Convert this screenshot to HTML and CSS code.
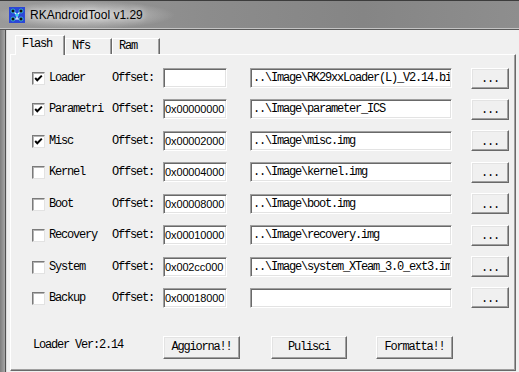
FILE: index.html
```html
<!DOCTYPE html>
<html lang="it">
<head>
    <meta charset="utf-8">
    <title>RKAndroidTool v1.29</title>
    <link rel="stylesheet" href="styles.css">
</head>
<body>
    <div class="window">
        <div class="titlebar">
            <svg class="app-icon" width="16" height="16" viewBox="0 0 16 16">
                <rect x="0" y="0" width="16" height="16" fill="#2b47d6"/>
                <path d="M4 4 L8 8 L12 4 M8 8 L8 12 M4 12 L8 12 L12 12" stroke="#ffffff" stroke-width="1.2" fill="none"/>
                <circle cx="4" cy="4" r="2" fill="#101010" stroke="#38d0f0" stroke-width="0.8"/>
                <circle cx="12" cy="4" r="2" fill="#101010" stroke="#38d0f0" stroke-width="0.8"/>
                <circle cx="8" cy="8" r="1.8" fill="#38d0f0"/>
                <circle cx="4" cy="12" r="2" fill="#101010" stroke="#38d0f0" stroke-width="0.8"/>
                <circle cx="12" cy="12" r="2" fill="#101010" stroke="#38d0f0" stroke-width="0.8"/>
            </svg>
            <span class="title">RKAndroidTool v1.29</span>
        </div>
        <div class="frame">
            <div class="frame-left"></div>
            <div class="client">
                <div class="tabs">
                    <div class="tab active">Flash</div>
                    <div class="tab">Nfs</div>
                    <div class="tab">Ram</div>
                </div>
                <div class="panel">
                    <div class="rows">
                        <span class="check checked"></span>
                        <span class="name">Loader</span>
                        <span class="offset-label">Offset:</span>
                        <input class="offset" type="text" value="">
                        <input class="path" type="text" value="..\Image\RK29xxLoader(L)_V2.14.bin">
                        <button class="browse">...</button>

                        <span class="check checked"></span>
                        <span class="name">Parametri</span>
                        <span class="offset-label">Offset:</span>
                        <input class="offset" type="text" value="0x00000000">
                        <input class="path" type="text" value="..\Image\parameter_ICS">
                        <button class="browse">...</button>

                        <span class="check checked"></span>
                        <span class="name">Misc</span>
                        <span class="offset-label">Offset:</span>
                        <input class="offset" type="text" value="0x00002000">
                        <input class="path" type="text" value="..\Image\misc.img">
                        <button class="browse">...</button>

                        <span class="check"></span>
                        <span class="name">Kernel</span>
                        <span class="offset-label">Offset:</span>
                        <input class="offset" type="text" value="0x00004000">
                        <input class="path" type="text" value="..\Image\kernel.img">
                        <button class="browse">...</button>

                        <span class="check"></span>
                        <span class="name">Boot</span>
                        <span class="offset-label">Offset:</span>
                        <input class="offset" type="text" value="0x00008000">
                        <input class="path" type="text" value="..\Image\boot.img">
                        <button class="browse">...</button>

                        <span class="check"></span>
                        <span class="name">Recovery</span>
                        <span class="offset-label">Offset:</span>
                        <input class="offset" type="text" value="0x00010000">
                        <input class="path" type="text" value="..\Image\recovery.img">
                        <button class="browse">...</button>

                        <span class="check"></span>
                        <span class="name">System</span>
                        <span class="offset-label">Offset:</span>
                        <input class="offset" type="text" value="0x002cc000">
                        <input class="path" type="text" value="..\Image\system_XTeam_3.0_ext3.img">
                        <button class="browse">...</button>

                        <span class="check"></span>
                        <span class="name">Backup</span>
                        <span class="offset-label">Offset:</span>
                        <input class="offset" type="text" value="0x00018000">
                        <input class="path" type="text" value="">
                        <button class="browse">...</button>
                    </div>
                    <div class="footer">
                        <span class="version">Loader Ver:2.14</span>
                        <button class="action">Aggiorna!!</button>
                        <button class="action pulisci">Pulisci</button>
                        <button class="action formatta">Formatta!!</button>
                    </div>
                </div>
            </div>
        </div>
    </div>
</body>
</html>
```

FILE: styles.css
```css
/* Whole window fills the viewport */
body {
    margin: 0;
    width: 519px;
    height: 372px;
    overflow: hidden;
    background: #f0f0f0;
}

.window {
    display: flex;
    flex-direction: column;
    height: 372px;
}

/* Aero-like grey glass title bar */
.titlebar {
    height: 27px;
    display: flex;
    align-items: center;
    padding-left: 9px;
    border-top: 1px solid #3c3c3c;
    border-bottom: 1px solid #c4c4c4;
    background:
        radial-gradient(ellipse 90px 14px at 85px 14px, rgba(225, 225, 225, 0.85), rgba(225, 225, 225, 0) 100%),
        linear-gradient(90deg, #9a9a9a 0%, #8c8c8c 40%, #858585 70%, #8e8e8e 100%);
}

.app-icon {
    display: block;
    margin-top: 1px;
}

.title {
    margin-left: 5px;
    font-family: "Liberation Sans", Arial, sans-serif;
    font-size: 12px;
    color: #000;
    text-shadow: 0 0 6px rgba(255, 255, 255, 0.9);
}

.frame {
    flex: 1;
    display: flex;
    border-top: 1px solid #5a5a5a;
}

.frame-left {
    width: 5px;
    border-right: 1px solid #505050;
    background: linear-gradient(90deg, #7e7e7e, #a6a6a6);
    box-shadow: 1px 0 0 #dcdcdc;
    margin-right: 1px;
}

/* Client area */
.client {
    flex: 1;
    padding: 5px 0 0 3px;
    background: #f0f0f0;
    font-family: "Liberation Mono", "Courier New", monospace;
    font-size: 12px;
    letter-spacing: -1.2px;
    color: #000;
}

/* Tab strip */
.tabs {
    display: flex;
    align-items: flex-end;
    height: 19px;
    margin-left: 5px;
    position: relative;
    z-index: 1;
}

.tab {
    box-sizing: border-box;
    height: 16px;
    padding-left: 6px;
    line-height: 14px;
    border: 1px solid #fff;
    border-right-color: #696969;
    border-bottom: none;
    box-shadow: inset -1px 0 0 #a0a0a0;
    background: #f0f0f0;
}

.tab.active {
    width: 50px;
    height: 20px;
    margin-bottom: -1px;
    padding-left: 6px;
    line-height: 16px;
}

.tab:nth-child(2) {
    width: 47px;
}

.tab:nth-child(3) {
    width: 48px;
}

/* Tab page */
.panel {
    box-sizing: border-box;
    width: 506px;
    height: 317px;
    padding: 13px 0 0 21px;
    border: 1px solid #fff;
    border-right-color: #696969;
    border-bottom-color: #696969;
    box-shadow: inset -1px -1px 0 #a0a0a0;
}

.rows {
    display: grid;
    grid-template-columns: 17px 63px 51px 87px 221px 38px;
    grid-auto-rows: 20px;
    row-gap: 11.43px;
    align-items: center;
}

.check {
    box-sizing: border-box;
    width: 13px;
    height: 13px;
    margin-top: 1px;
    border: 1px solid;
    border-color: #7a7a7a #e2e2e2 #e2e2e2 #7a7a7a;
    box-shadow: inset 1px 1px 0 #b4b4b4;
    background: #fff;
}

.check.checked {
    background: #fff url("data:image/svg+xml,%3Csvg xmlns='http://www.w3.org/2000/svg' width='11' height='11'%3E%3Cpath d='M2.2 5 L4.3 7.3 L8.8 2.6' stroke='%23000' stroke-width='2' fill='none'/%3E%3C/svg%3E") no-repeat 0 0;
}

.name,
.offset-label {
    white-space: nowrap;
    line-height: 14px;
}

/* Sunken edit boxes */
.offset,
.path {
    box-sizing: border-box;
    height: 20px;
    margin: 0;
    padding: 0 1px;
    border: 1px solid;
    border-color: #a0a0a0 #fff #fff #a0a0a0;
    box-shadow: inset 1px 1px 0 #696969, inset -1px -1px 0 #e3e3e3;
    background: #fff;
    color: #000;
    outline: none;
}

.offset {
    width: 64px;
    padding: 0 0 0 1px;
    font-family: "Liberation Sans", Arial, sans-serif;
    font-size: 11px;
    letter-spacing: -0.12px;
}

.path {
    width: 202px;
    padding-left: 2px;
    font-family: "Liberation Mono", "Courier New", monospace;
    font-size: 12px;
    letter-spacing: -1.2px;
}

/* Raised push buttons */
.browse,
.action {
    box-sizing: border-box;
    margin: 0;
    padding: 0;
    border: 1px solid;
    border-color: #fff #696969 #696969 #fff;
    box-shadow: inset -1px -1px 0 #a0a0a0, inset 1px 1px 0 #e3e3e3;
    background: #f0f0f0;
    color: #000;
    font-family: "Liberation Mono", "Courier New", monospace;
    font-size: 12px;
    letter-spacing: -1.2px;
}

.browse {
    width: 38px;
    height: 21px;
    padding-top: 2px;
}

.footer {
    display: flex;
    align-items: center;
    margin-top: 28px;
    padding-left: 1px;
}

.version {
    width: 130px;
    margin-top: -5px;
}

.action {
    width: 77px;
    height: 23px;
}

.pulisci {
    width: 76px;
    margin-left: 31px;
}

.formatta {
    margin-left: 29px;
}
```
